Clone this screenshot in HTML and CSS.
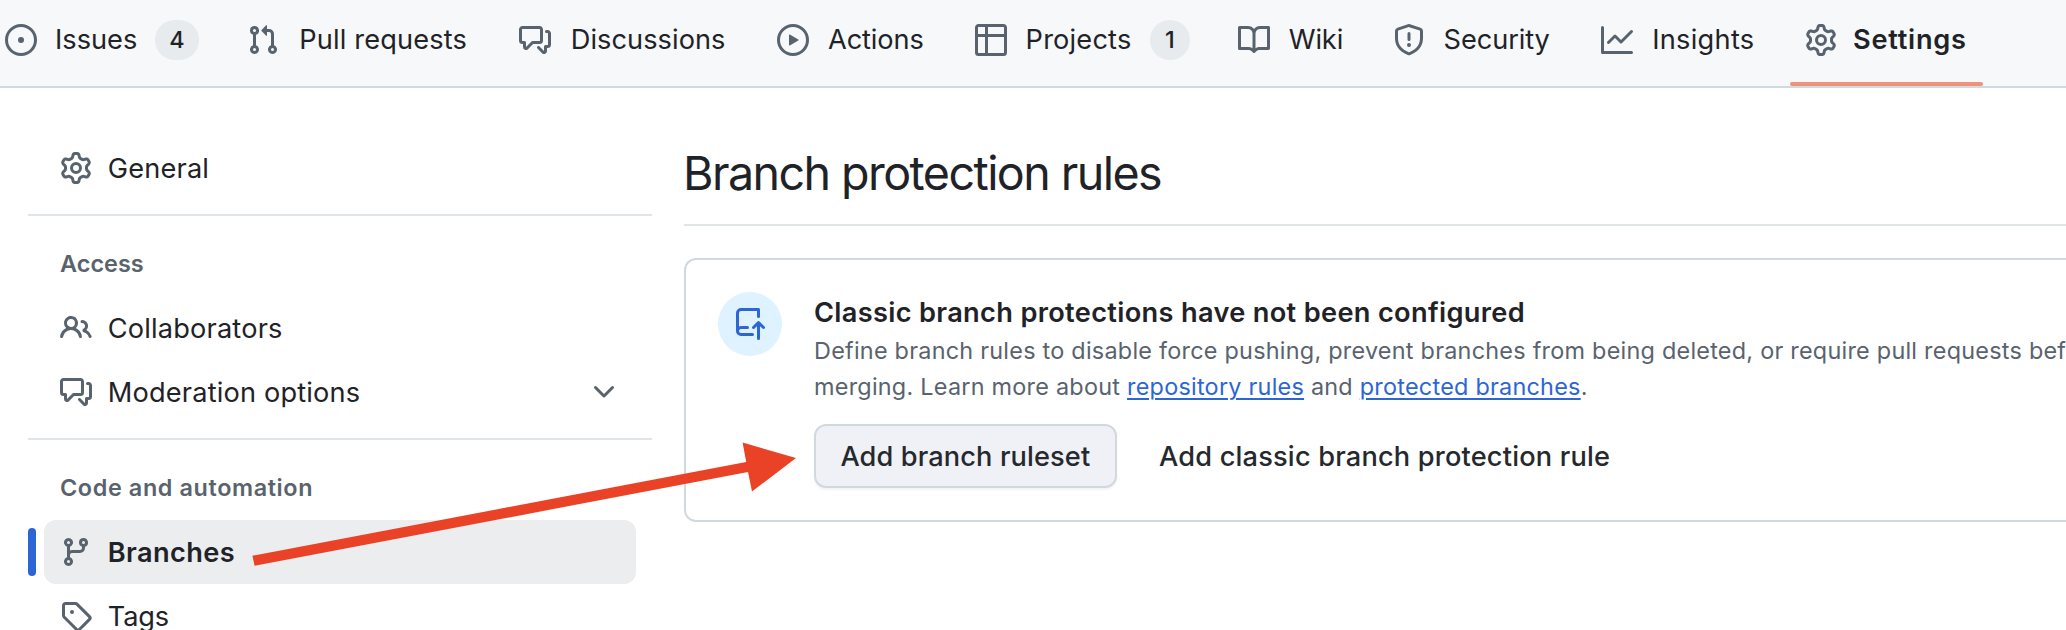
FILE: index.html
```
<!DOCTYPE html>
<html lang="en">
<head>
<meta charset="utf-8">
<title>Branch protection rules</title>
<link rel="stylesheet" href="styles.css">
</head>
<body>
<svg class="sprite" aria-hidden="true">
  <symbol id="gear" viewBox="0 0 16 16"><path d="M8 0a8.2 8.2 0 0 1 .701.031C9.444.095 9.99.645 10.16 1.29l.288 1.107c.018.066.079.158.212.224.231.114.454.243.668.386.123.082.233.09.299.071l1.103-.303c.644-.176 1.392.021 1.82.63.27.385.506.792.704 1.218.315.675.111 1.422-.364 1.891l-.814.806c-.049.048-.098.147-.088.294.016.257.016.515 0 .772-.01.147.038.246.088.294l.814.806c.475.469.679 1.216.364 1.891a7.977 7.977 0 0 1-.704 1.217c-.428.61-1.176.807-1.82.63l-1.102-.302c-.067-.019-.177-.011-.3.071a5.909 5.909 0 0 1-.668.386c-.133.066-.194.158-.211.224l-.29 1.106c-.168.646-.715 1.196-1.458 1.26a8.006 8.006 0 0 1-1.402 0c-.743-.064-1.289-.614-1.458-1.26l-.289-1.106c-.018-.066-.079-.158-.212-.224a5.738 5.738 0 0 1-.668-.386c-.123-.082-.233-.09-.299-.071l-1.103.303c-.644.176-1.392-.021-1.82-.63a8.12 8.12 0 0 1-.704-1.218c-.315-.675-.111-1.422.363-1.891l.815-.806c.05-.048.098-.147.088-.294a6.214 6.214 0 0 1 0-.772c.01-.147-.038-.246-.088-.294l-.815-.806C.635 6.045.431 5.298.746 4.623a7.92 7.92 0 0 1 .704-1.217c.428-.61 1.176-.807 1.82-.63l1.102.302c.067.019.177.011.3-.071.214-.143.437-.272.668-.386.133-.066.194-.158.211-.224l.29-1.106C6.009.645 6.556.095 7.299.03 7.53.01 7.764 0 8 0Zm-.571 1.525c-.036.003-.108.036-.137.146l-.289 1.105c-.147.561-.549.967-.998 1.189-.173.086-.34.183-.5.29-.417.278-.97.423-1.529.27l-1.103-.303c-.109-.03-.175.016-.195.045-.22.312-.412.644-.573.99-.014.031-.021.11.059.19l.815.806c.411.406.562.957.53 1.456a4.709 4.709 0 0 0 0 .582c.032.499-.119 1.05-.53 1.456l-.815.806c-.081.08-.073.159-.059.19.162.346.353.677.573.989.02.03.085.076.195.046l1.102-.303c.56-.153 1.113-.008 1.53.27.161.107.328.204.501.29.447.222.85.629.997 1.189l.289 1.105c.029.109.101.143.137.146a6.6 6.6 0 0 0 1.142 0c.036-.003.108-.036.137-.146l.289-1.105c.147-.561.549-.967.998-1.189.173-.086.34-.183.5-.29.417-.278.97-.423 1.529-.27l1.103.303c.109.029.175-.016.195-.045.22-.313.411-.644.573-.99.014-.031.021-.11-.059-.19l-.815-.806c-.411-.406-.562-.957-.53-1.456a4.709 4.709 0 0 0 0-.582c-.032-.499.119-1.05.53-1.456l.815-.806c.081-.08.073-.159.059-.19a6.464 6.464 0 0 0-.573-.989c-.02-.03-.085-.076-.195-.046l-1.102.303c-.56.153-1.113.008-1.53-.27a4.44 4.44 0 0 0-.501-.29c-.447-.222-.85-.629-.997-1.189l-.289-1.105c-.029-.11-.101-.143-.137-.146a6.6 6.6 0 0 0-1.142 0ZM11 8a3 3 0 1 1-6 0 3 3 0 0 1 6 0ZM9.5 8a1.5 1.5 0 1 0-3.001.001A1.5 1.5 0 0 0 9.5 8Z"/></symbol>
  <symbol id="issue" viewBox="0 0 16 16"><path d="M8 9.5a1.5 1.5 0 1 0 0-3 1.5 1.5 0 0 0 0 3Z"/><path d="M8 0a8 8 0 1 1 0 16A8 8 0 0 1 8 0ZM1.5 8a6.5 6.5 0 1 0 13 0 6.5 6.5 0 0 0-13 0Z"/></symbol>
  <symbol id="pull" viewBox="0 0 16 16"><path d="M1.5 3.25a2.25 2.25 0 1 1 3 2.122v5.256a2.251 2.251 0 1 1-1.5 0V5.372A2.25 2.25 0 0 1 1.5 3.25Zm5.677-.177L9.573.677A.25.25 0 0 1 10 .854V2.5h1A2.5 2.5 0 0 1 13.5 5v5.628a2.251 2.251 0 1 1-1.5 0V5a1 1 0 0 0-1-1h-1v1.646a.25.25 0 0 1-.427.177L7.177 3.427a.25.25 0 0 1 0-.354ZM3.75 2.5a.75.75 0 1 0 0 1.5.75.75 0 0 0 0-1.5Zm0 9.5a.75.75 0 1 0 0 1.5.75.75 0 0 0 0-1.5Zm8.25.75a.75.75 0 1 0 1.5 0 .75.75 0 0 0-1.5 0Z"/></symbol>
  <symbol id="discuss" viewBox="0 0 16 16"><path d="M1.75 1h8.5c.966 0 1.75.784 1.75 1.75v5.5A1.75 1.75 0 0 1 10.25 10H7.061l-2.574 2.573A1.458 1.458 0 0 1 2 11.543V10h-.25A1.75 1.75 0 0 1 0 8.25v-5.5C0 1.784.784 1 1.75 1ZM1.5 2.75v5.5c0 .138.112.25.25.25h1a.75.75 0 0 1 .75.75v2.19l2.72-2.72a.749.749 0 0 1 .53-.22h3.5a.25.25 0 0 0 .25-.25v-5.5a.25.25 0 0 0-.25-.25h-8.5a.25.25 0 0 0-.25.25Zm13 2a.25.25 0 0 0-.25-.25h-.5a.75.75 0 0 1 0-1.5h.5c.966 0 1.75.784 1.75 1.75v5.5A1.75 1.75 0 0 1 14.25 12H14v1.543a1.458 1.458 0 0 1-2.487 1.03L9.22 12.28a.749.749 0 0 1 .326-1.275.749.749 0 0 1 .734.215l2.22 2.22v-2.19a.75.75 0 0 1 .75-.75h1a.25.25 0 0 0 .25-.25Z"/></symbol>
  <symbol id="play" viewBox="0 0 16 16"><path d="M8 0a8 8 0 1 1 0 16A8 8 0 0 1 8 0ZM1.5 8a6.5 6.5 0 1 0 13 0 6.5 6.5 0 0 0-13 0Zm4.879-2.773 4.264 2.559a.25.25 0 0 1 0 .428l-4.264 2.559A.25.25 0 0 1 6 10.559V5.442a.25.25 0 0 1 .379-.215Z"/></symbol>
  <symbol id="table" viewBox="0 0 16 16"><path d="M0 1.75C0 .784.784 0 1.75 0h12.5C15.216 0 16 .784 16 1.75v12.5A1.75 1.75 0 0 1 14.25 16H1.75A1.75 1.75 0 0 1 0 14.25ZM6.5 6.5v8h7.75a.25.25 0 0 0 .25-.25V6.5Zm8-1.5V1.75a.25.25 0 0 0-.25-.25H6.5V5Zm-13 1.5v7.75c0 .138.112.25.25.25H5v-8ZM5 5V1.5H1.75a.25.25 0 0 0-.25.25V5Z"/></symbol>
  <symbol id="book" viewBox="0 0 16 16"><path d="M0 1.75A.75.75 0 0 1 .75 1h4.253c1.227 0 2.317.59 3 1.501A3.743 3.743 0 0 1 11.006 1h4.245a.75.75 0 0 1 .75.75v10.5a.75.75 0 0 1-.75.75h-4.507a2.25 2.25 0 0 0-1.591.659l-.622.621a.75.75 0 0 1-1.06 0l-.622-.621A2.25 2.25 0 0 0 5.258 13H.75a.75.75 0 0 1-.75-.75Zm7.251 10.324.004-5.073-.002-2.253A2.25 2.25 0 0 0 5.003 2.5H1.5v9h3.757a3.75 3.75 0 0 1 1.994.574ZM8.755 4.75l-.004 7.322a3.752 3.752 0 0 1 1.992-.572H14.5v-9h-3.495a2.25 2.25 0 0 0-2.25 2.25Z"/></symbol>
  <symbol id="shield" viewBox="0 0 16 16"><path d="M7.467.133a1.748 1.748 0 0 1 1.066 0l5.25 1.68A1.75 1.75 0 0 1 15 3.48V7c0 1.566-.32 3.182-1.303 4.682-.983 1.498-2.585 2.813-5.032 3.855a1.697 1.697 0 0 1-1.33 0c-2.447-1.042-4.049-2.357-5.032-3.855C1.32 10.182 1 8.566 1 7V3.48a1.75 1.75 0 0 1 1.217-1.667Zm.61 1.429a.25.25 0 0 0-.153 0l-5.25 1.68a.25.25 0 0 0-.174.238V7c0 1.358.275 2.666 1.057 3.86.784 1.194 2.121 2.34 4.366 3.297a.196.196 0 0 0 .154 0c2.245-.956 3.582-2.104 4.366-3.298C13.225 9.666 13.5 8.36 13.5 7V3.48a.251.251 0 0 0-.174-.237l-5.25-1.68ZM8.75 4.75v3a.75.75 0 0 1-1.5 0v-3a.75.75 0 0 1 1.5 0ZM9 10.5a1 1 0 1 1-2 0 1 1 0 0 1 2 0Z"/></symbol>
  <symbol id="graph" viewBox="0 0 16 16"><path d="M1.5 1.75V13.5h13.75a.75.75 0 0 1 0 1.5H.75a.75.75 0 0 1-.75-.75V1.75a.75.75 0 0 1 1.5 0Zm14.28 2.53-5.25 5.25a.75.75 0 0 1-1.06 0L7 7.06 4.28 9.78a.751.751 0 0 1-1.042-.018.751.751 0 0 1-.018-1.042l3.25-3.25a.75.75 0 0 1 1.06 0L10 7.94l4.72-4.72a.751.751 0 0 1 1.042.018.751.751 0 0 1 .018 1.042Z"/></symbol>
  <symbol id="people" viewBox="0 0 16 16"><path d="M2 5.5a3.5 3.5 0 1 1 5.898 2.549 5.508 5.508 0 0 1 3.034 4.084.75.75 0 1 1-1.482.235 4 4 0 0 0-7.9 0 .75.75 0 0 1-1.482-.236A5.507 5.507 0 0 1 3.102 8.05 3.493 3.493 0 0 1 2 5.5ZM11 4a3.001 3.001 0 0 1 2.22 5.018 5.01 5.01 0 0 1 2.56 3.012.749.749 0 0 1-.885.954.752.752 0 0 1-.549-.514 3.507 3.507 0 0 0-2.522-2.372.75.75 0 0 1-.574-.73v-.352a.75.75 0 0 1 .416-.672A1.5 1.5 0 0 0 11 5.5.75.75 0 0 1 11 4Zm-5.5-.5a2 2 0 1 0-.001 3.999A2 2 0 0 0 5.5 3.5Z"/></symbol>
  <symbol id="chevron" viewBox="0 0 16 16"><path d="M12.78 5.22a.749.749 0 0 1 0 1.06l-4.25 4.25a.749.749 0 0 1-1.06 0L3.22 6.28a.749.749 0 1 1 1.06-1.06L8 8.939l3.72-3.719a.749.749 0 0 1 1.06 0Z"/></symbol>
  <symbol id="branch" viewBox="0 0 16 16"><path d="M9.5 3.25a2.25 2.25 0 1 1 3 2.122V6A2.5 2.5 0 0 1 10 8.5H6a1 1 0 0 0-1 1v1.128a2.251 2.251 0 1 1-1.5 0V5.372a2.25 2.25 0 1 1 1.5 0v1.836A2.493 2.493 0 0 1 6 7h4a1 1 0 0 0 1-1v-.628A2.25 2.25 0 0 1 9.5 3.25Zm-6 0a.75.75 0 1 0 1.5 0 .75.75 0 0 0-1.5 0Zm8.25-.75a.75.75 0 1 0 0 1.5.75.75 0 0 0 0-1.5ZM4.25 12a.75.75 0 1 0 0 1.5.75.75 0 0 0 0-1.5Z"/></symbol>
  <symbol id="tag" viewBox="0 0 16 16"><path d="M1 7.775V2.75C1 1.784 1.784 1 2.75 1h5.025c.464 0 .91.184 1.238.513l6.25 6.25a1.75 1.75 0 0 1 0 2.474l-5.026 5.026a1.75 1.75 0 0 1-2.474 0l-6.25-6.25A1.752 1.752 0 0 1 1 7.775Zm1.5 0c0 .066.026.13.073.177l6.25 6.25a.25.25 0 0 0 .354 0l5.025-5.025a.25.25 0 0 0 0-.354l-6.25-6.25a.25.25 0 0 0-.177-.073H2.75a.25.25 0 0 0-.25.25ZM6 5a1 1 0 1 1 0 2 1 1 0 0 1 0-2Z"/></symbol>
  <symbol id="repo-push" viewBox="0 0 16 16"><path d="M1 2.5A2.5 2.5 0 0 1 3.5 0h8.75a.75.75 0 0 1 .75.75v3.5a.75.75 0 0 1-1.5 0V1.5h-8a1 1 0 0 0-1 1v6.708A2.493 2.493 0 0 1 3.5 9h3.25a.75.75 0 0 1 0 1.5H3.5a1 1 0 0 0 0 2h5.75a.75.75 0 0 1 0 1.5H3.5A2.5 2.5 0 0 1 1 11.5Zm13.23 7.79h-.001l-1.224-1.224v6.184a.75.75 0 0 1-1.5 0V9.066L10.28 10.29a.75.75 0 0 1-1.06-1.061l2.505-2.504a.75.75 0 0 1 1.06 0L15.29 9.23a.751.751 0 0 1-.018 1.042.751.751 0 0 1-1.042.018Z"/></symbol>
</svg>

<nav class="tabs">
  <a class="tab issues"><svg class="icon"><use href="#issue"/></svg><span class="label">Issues</span><span class="counter">4</span></a>
  <a class="tab pulls"><svg class="icon"><use href="#pull"/></svg><span class="label">Pull requests</span></a>
  <a class="tab discussions"><svg class="icon"><use href="#discuss"/></svg><span class="label">Discussions</span></a>
  <a class="tab actions"><svg class="icon"><use href="#play"/></svg><span class="label">Actions</span></a>
  <a class="tab projects"><svg class="icon"><use href="#table"/></svg><span class="label">Projects</span><span class="counter">1</span></a>
  <a class="tab wiki"><svg class="icon"><use href="#book"/></svg><span class="label">Wiki</span></a>
  <a class="tab security"><svg class="icon"><use href="#shield"/></svg><span class="label">Security</span></a>
  <a class="tab insights"><svg class="icon"><use href="#graph"/></svg><span class="label">Insights</span></a>
  <a class="tab settings selected"><svg class="icon"><use href="#gear"/></svg><span class="label">Settings</span></a>
</nav>

<div class="layout">
  <aside class="sidebar">
    <section class="group">
      <a class="item"><svg class="icon"><use href="#gear"/></svg><span>General</span></a>
    </section>
    <section class="group">
      <h2 class="group-title">Access</h2>
      <a class="item"><svg class="icon"><use href="#people"/></svg><span>Collaborators</span></a>
      <a class="item"><svg class="icon"><use href="#discuss"/></svg><span>Moderation options</span><svg class="icon chevron"><use href="#chevron"/></svg></a>
    </section>
    <section class="group">
      <h2 class="group-title wide">Code and automation</h2>
      <a class="item current"><svg class="icon"><use href="#branch"/></svg><span>Branches</span></a>
      <a class="item tags"><svg class="icon"><use href="#tag"/></svg><span>Tags</span></a>
    </section>
  </aside>

  <main class="content">
    <h1 class="title">Branch protection rules</h1>
    <section class="card">
      <div class="badge"><svg class="icon"><use href="#repo-push"/></svg></div>
      <div class="card-body">
        <h3 class="card-title">Classic branch protections have not been configured</h3>
        <p class="card-text">Define branch rules to disable force pushing, prevent branches from being deleted, or require pull requests before<br>merging. Learn more about <a class="link">repository rules</a> and <a class="link">protected branches</a>.</p>
        <div class="buttons">
          <button class="btn">Add branch ruleset</button>
          <button class="btn plain">Add classic branch protection rule</button>
        </div>
      </div>
    </section>
  </main>
</div>

<svg class="arrow" viewBox="0 0 2066 630" aria-hidden="true"><path d="M252.4 555.8 746.2 462 742.6 442.5 796 458 752 491.5 748 472 254.6 565.8Z"/></svg>
</body>
</html>
```
FILE: styles.css
```
* { box-sizing: border-box; }
body {
  margin: 0;
  width: 2066px;
  height: 630px;
  overflow: hidden;
  position: relative;
  background: #fff;
  color: #1f2328;
  font-family: Inter, "Liberation Sans", sans-serif;
  font-size: 27.2px;
}
.sprite { display: none; }
.icon { width: 32px; height: 32px; flex: none; fill: #59636e; }

.tabs {
  display: flex;
  height: 88px;
  padding-left: 5px;
  background: #f6f8fa;
  border-bottom: 2px solid #d1d9e0;
}
.tab {
  position: relative;
  display: flex;
  flex: none;
  align-items: center;
  height: 80px;
  white-space: nowrap;
}
.label { margin-left: 18px; line-height: 40px; }
.counter {
  height: 40px;
  margin-left: auto;
  border-radius: 20px;
  background: #e7ebee;
  font-size: 23.4px;
  font-weight: 500;
  line-height: 40px;
  text-align: center;
}
.issues { width: 242px; padding-right: 48px; }
.issues .counter { width: 44px; }
.pulls { width: 272px; letter-spacing: .15px; }
.pulls .label { margin-left: 20.2px; }
.discussions { width: 258px; letter-spacing: .049px; }
.discussions .label { margin-left: 19.8px; }
.actions { width: 198px; letter-spacing: -.106px; }
.actions .label { margin-left: 19px; }
.projects { width: 263px; padding-right: 48px; letter-spacing: .18px; }
.projects .label { margin-left: 18.6px; }
.projects .counter { width: 40px; }
.wiki { width: 155px; letter-spacing: -.098px; }
.wiki .label { margin-left: 18.7px; }
.security { width: 208px; letter-spacing: -.082px; }
.security .label { margin-left: 18.6px; }
.insights { width: 204px; letter-spacing: .28px; }
.insights .label { margin-left: 19.2px; }
.settings { font-weight: 600; letter-spacing: .75px; }
.settings .label { margin-left: 16px; }
.selected::after {
  content: "";
  position: absolute;
  left: -15.5px;
  bottom: -6px;
  width: 193px;
  height: 4px;
  border-radius: 2px;
  background: #f0917b;
}
.tabs { padding-top: 0; }

.layout { display: flex; gap: 32px; padding: 48px 0 0 28px; }
.sidebar { flex: none; width: 624px; letter-spacing: .17px; }
.group + .group { margin-top: 14px; padding-top: 16px; border-top: 2px solid #e0e5ea; }
.group-title {
  margin: 0;
  padding: 0 32px;
  color: #59636e;
  font-size: 23.4px;
  font-weight: 600;
  line-height: 64px;
  letter-spacing: .05px;
}
.group-title.wide { letter-spacing: .61px; }
.item {
  position: relative;
  display: flex;
  align-items: center;
  gap: 15.8px;
  height: 64px;
  margin: 0 16px;
  padding: 0 16px;
  border-radius: 12px;
}
.current { background: #ecedef; font-weight: 600; letter-spacing: .39px; }
.current::before {
  content: "";
  position: absolute;
  left: -16px;
  top: 8px;
  width: 8px;
  height: 48px;
  border-radius: 4px;
  background: #2c66d5;
}
.tags { letter-spacing: -.166px; }
.chevron { margin-left: auto; }

.content { flex: 1; min-width: 0; overflow: hidden; }
.title {
  margin: 0 0 32px;
  height: 90px;
  border-bottom: 2px solid #e0e5ea;
  font-size: 46.6px;
  font-weight: 400;
  line-height: 74px;
  letter-spacing: -1.565px;
  text-indent: -1px;
}
.card {
  display: flex;
  gap: 32px;
  height: 264px;
  padding: 32px 0 32px 32px;
  border: 2px solid #d1d9e0;
  border-right: 0;
  border-radius: 12px 0 0 12px;
}
.badge {
  display: flex;
  flex: none;
  align-items: center;
  justify-content: center;
  width: 64px;
  height: 64px;
  border-radius: 50%;
  background: #dff2ff;
}
.badge .icon { fill: #2c66d5; }
.card-body { flex: 1; min-width: 0; white-space: nowrap; }
.card-title { margin: 0; padding-top: 1px; font-size: 27.2px; font-weight: 600; line-height: 40px; letter-spacing: .325px; }
.card-text { margin: 0 0 19px; color: #59636e; font-size: 23.4px; line-height: 36px; letter-spacing: .25px; }
.link { color: #2c66d5; text-decoration: underline; text-decoration-thickness: 2px; text-underline-offset: 3px; }
.buttons { display: flex; gap: 16px; }
.btn {
  height: 64px;
  padding: 0 24.4px;
  border: 2px solid #d1d9e0;
  border-radius: 12px;
  background: #f0f1f6;
  color: #25292e;
  font: 500 27.2px Inter, "Liberation Sans", sans-serif;
  letter-spacing: .117px;
  box-shadow: 0 2px 2px rgba(31, 35, 40, .05);
}
.plain { background: none; border-color: transparent; box-shadow: none; letter-spacing: .182px; }

.arrow { position: absolute; left: 0; top: 0; width: 2066px; height: 630px; fill: #ea4226; pointer-events: none; }
```
